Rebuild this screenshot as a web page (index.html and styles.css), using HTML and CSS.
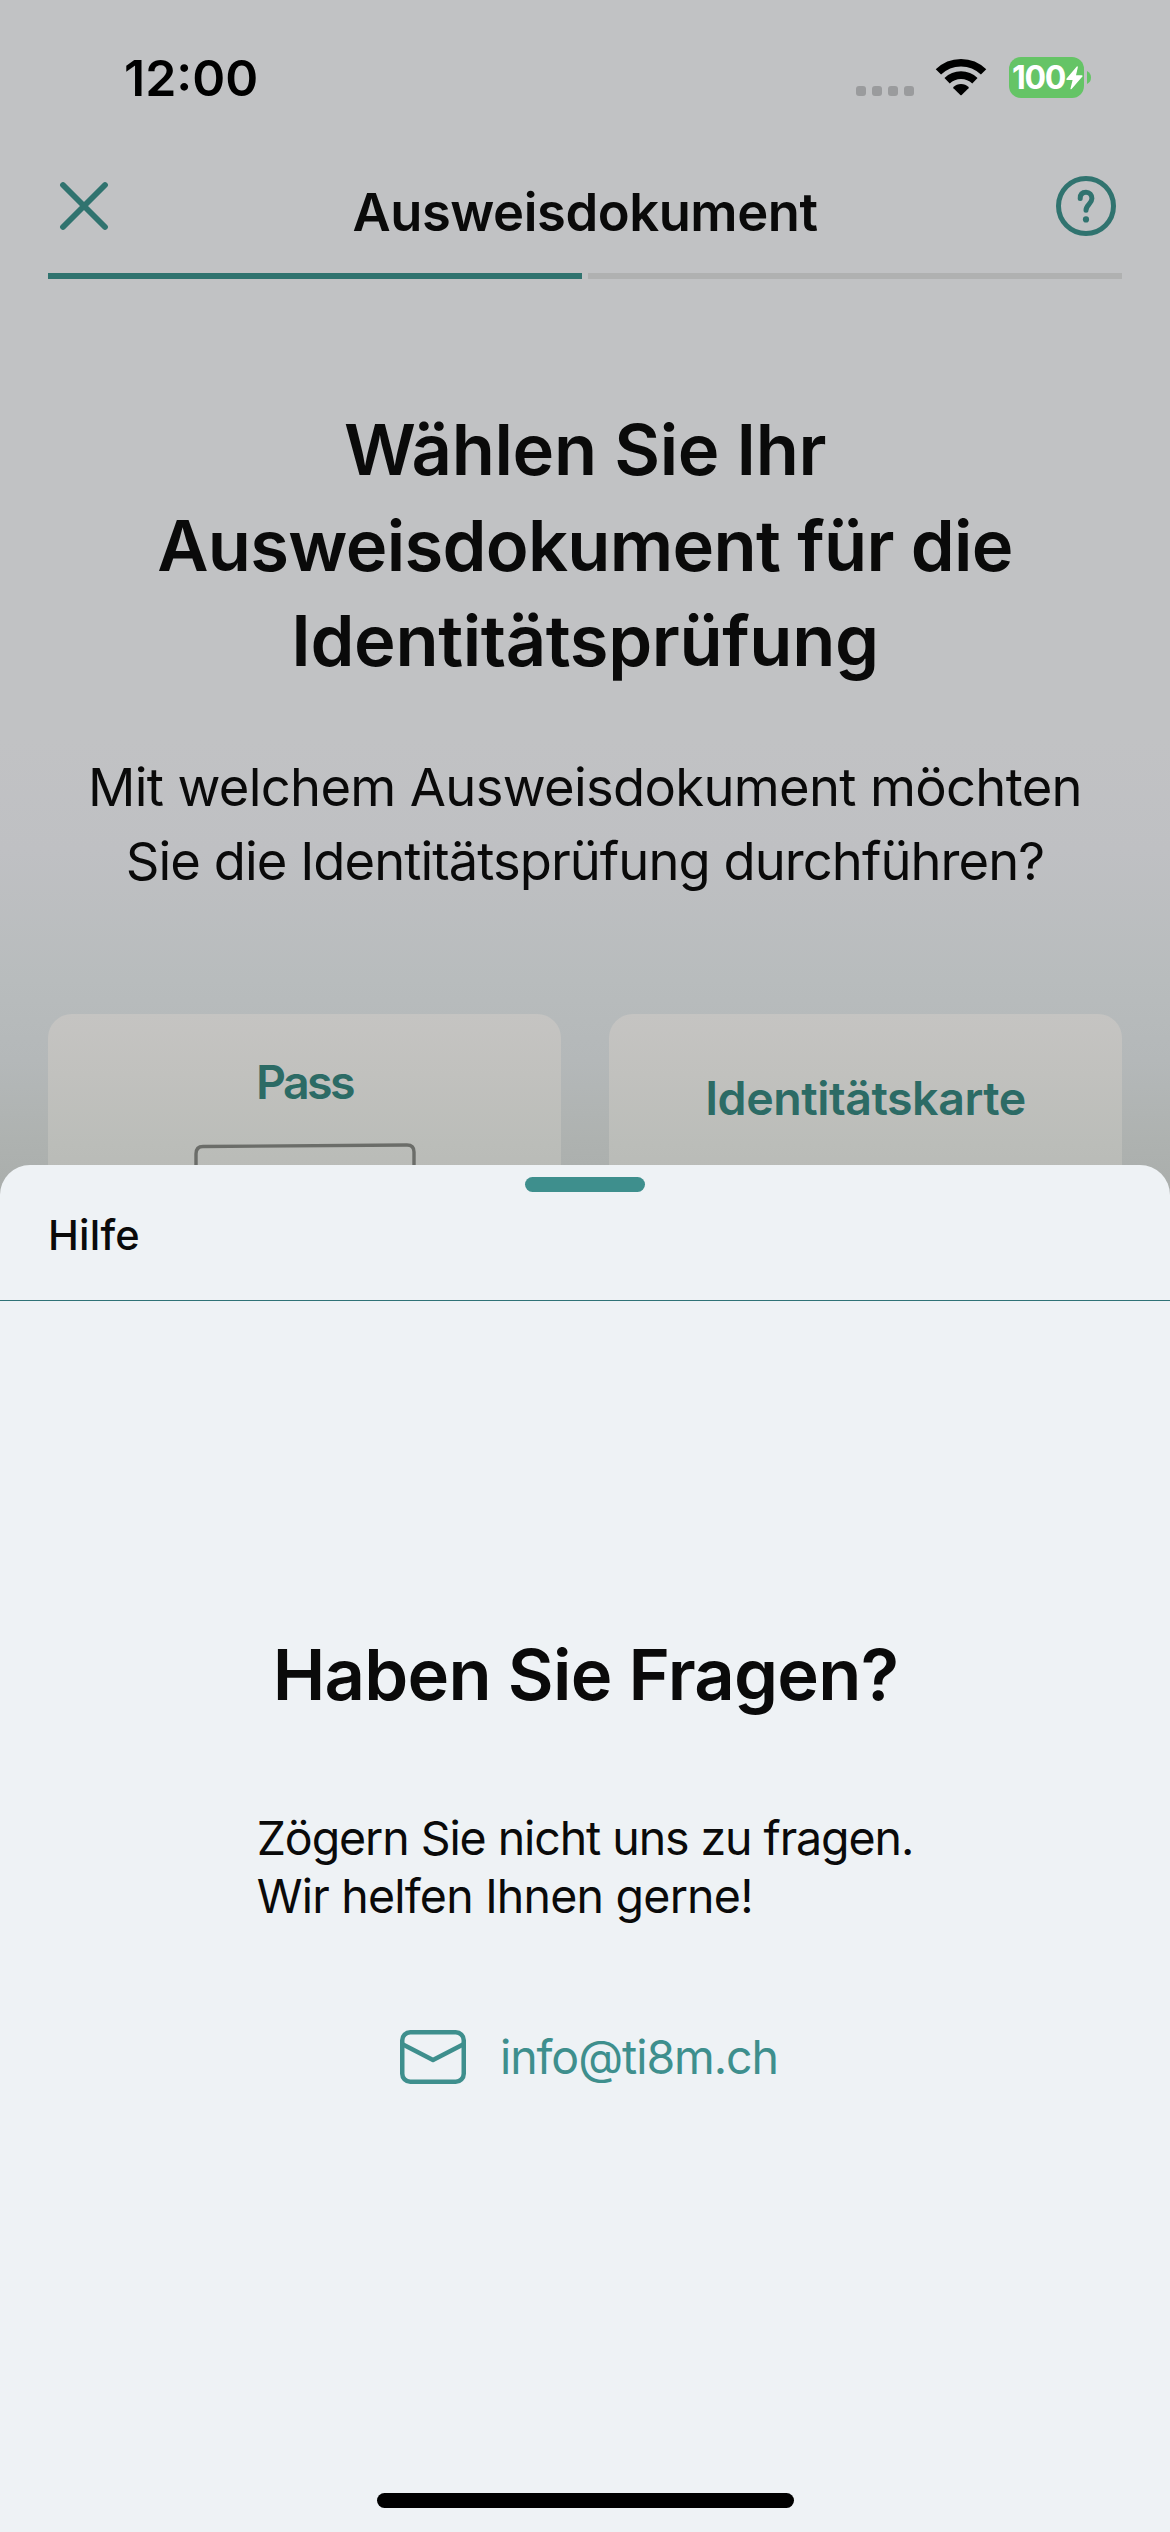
FILE: index.html
```html
<!DOCTYPE html>
<html lang="de">
<head>
<meta charset="utf-8">
<title>Ausweisdokument</title>
<link rel="stylesheet" href="styles.css">
</head>
<body>
<div class="screen">
  <div class="status">
    <span class="time">12:00</span>
    <div class="status-icons">
      <div class="cell"><i></i><i></i><i></i><i></i></div>
      <svg class="wifi" width="52" height="38" viewBox="0 0 52 38"><g fill="none" stroke="#000" stroke-width="7.6"><path d="M3.4 13.9A32.3 32.3 0 0 1 48.6 13.9"/><path d="M12.1 22.7A20 20 0 0 1 39.9 22.7"/></g><path d="M18.4 29.1a10.8 10.8 0 0 1 15.2 0q.4.6-.1 1.1L26.7 37q-.7.6-1.4 0l-6.800-6.800q-.5-.5-.1-1.100z"/></svg>
      <div class="battery">
        <div class="level"><span class="percent">100</span><svg width="17" height="24" viewBox="0 0 17 24"><path fill="#fff" d="M10.800.5Q12 0 11.800 1.400L10 9.300h5.800q1.300.2.4 1.500L5.600 22.900Q4.300 24 4.500 22.400L6.600 13.900H1Q-.2 13.700.6 12.500z"/></svg></div>
        <svg class="nub" width="4" height="13" viewBox="0 0 4 13"><path fill="#65c466" d="M0 0Q4 2 4 6.500T0 13z"/></svg>
      </div>
    </div>
  </div>

  <header class="bar">
    <svg class="close" width="60" height="60" viewBox="0 0 60 60"><path d="M9 9l42 42M51 9L9 51"/></svg>
    <h1 class="bar-title">Ausweisdokument</h1>
    <svg class="help" width="60" height="60" viewBox="0 0 60 60"><circle cx="30" cy="30" r="27.500"/><path d="M24.200 22.500C24.200 18.200 26.500 16.300 30 16.300S35.900 18.800 35.900 22.600C35.900 27.800 30 28.700 30 34.200"/><circle class="dot" cx="30" cy="43.400" r="3.100"/></svg>
  </header>
  <div class="progress"><div class="step done"></div><div class="step"></div></div>

  <main class="content">
    <h2 class="headline">Wählen Sie Ihr<br><span class="tight">Ausweisdokument für die</span><br>Identitätsprüfung</h2>
    <p class="lead">Mit welchem Ausweisdokument möchten<br><span class="tight">Sie die Identitätsprüfung durchführen?</span></p>
    <div class="cards">
      <div class="card"><span class="label pass">Pass</span>
        <svg class="passport" width="222" height="260" viewBox="0 0 222 260"><path d="M2 250V12Q2 4.500 9 4.500L213 3Q220 3 220 10V250"/></svg>
      </div>
      <div class="card id"><span class="label">Identitätskarte</span></div>
    </div>
  </main>

  <section class="sheet">
    <div class="sheet-head"><div class="handle"></div><span class="sheet-title">Hilfe</span></div>
    <div class="sheet-body">
      <h2 class="question">Haben Sie Fragen?</h2>
      <p class="info">Zögern Sie nicht uns zu fragen.<br><span class="loose">Wir helfen Ihnen gerne!</span></p>
      <div class="mail">
        <svg width="66" height="54" viewBox="0 0 66 54"><rect x="2.250" y="2.250" width="61.500" height="49.500" rx="8"/><path d="M3 14.500L33 30 63 14.500"/></svg>
        <span class="address">info@ti8m.ch</span>
      </div>
    </div>
    <div class="home"></div>
  </section>
</div>
</body>
</html>
```
FILE: styles.css
```css
* { box-sizing: border-box; }
body { margin: 0; font-family: Inter, "Liberation Sans", sans-serif; color: #0a0a0a; }
h1, h2, p { margin: 0; }
svg { display: block; flex: none; }

.screen {
  position: relative;
  width: 1170px;
  height: 2532px;
  overflow: hidden;
  background: linear-gradient(#c1c2c4 0, #c1c2c4 740px, #bfc0c3 850px, #b8bcbd 980px, #b4b8b9 1060px, #aeb2b0 1140px, #a9adab 1200px);
}

/* status bar */
.status { display: flex; justify-content: space-between; height: 176px; padding: 48px 79px 0 124px; }
.time { font-size: 50px; line-height: 60px; font-weight: 600; color: #000; }
.status-icons { display: flex; align-items: flex-start; padding-top: 9px; }
.cell { display: flex; gap: 6px; margin: 29px 21px 0 0; }
.cell i { width: 10px; height: 10px; border-radius: 3px; background: #9a9b9d; }
.wifi { margin: 1px 22px 0 0; }
.battery { display: flex; align-items: center; gap: 3px; }
.level { display: flex; align-items: center; width: 75px; height: 41px; padding-left: 3px; border-radius: 12px; background: #65c466; }
.percent { width: 54px; padding-top: 1px; font-size: 32px; line-height: 40px; font-weight: 700; letter-spacing: -1.3px; color: #fff; }

/* navigation bar */
.bar { display: flex; align-items: center; justify-content: space-between; height: 60px; padding: 0 54px; }
.bar svg { fill: none; stroke: #30736f; stroke-width: 5; stroke-linecap: round; stroke-linejoin: round; }
.bar .close { stroke-width: 5.8; }
.bar .dot { fill: #30736f; stroke: none; }
.bar-title { margin-top: 12px; font-size: 52.5px; line-height: 60px; font-weight: 600; letter-spacing: -.45px; }
.progress { display: flex; gap: 6px; margin-top: 37px; padding: 0 48px; }
.step { flex: 1; height: 6px; background: #b0b1b1; }
.step.done { background: #30736f; }

/* document choice */
.content { padding: 123px 48px 0; text-align: center; }
.headline { font-size: 70.5px; line-height: 95.5px; font-weight: 600; letter-spacing: -.35px; }
.headline .tight { letter-spacing: -.7px; }
.lead { margin-top: 61px; font-size: 52.5px; line-height: 74px; letter-spacing: -.68px; }
.lead .tight { letter-spacing: -.95px; }
.cards { display: flex; gap: 48px; margin-top: 116px; }
.card { flex: 1; height: 420px; padding-top: 39px; border-radius: 24px; background: linear-gradient(#c5c4c2 0, #c1c1be 60px, #bbbdb9 130px, #b9bbb7 160px); }
.card.id { padding-top: 55px; }
.label { display: block; width: max-content; margin: 0 auto; font-size: 46.5px; line-height: 58px; font-weight: 600; letter-spacing: -.44px; color: #2c6b65; }
.label.pass { letter-spacing: -2.6px; }
.passport { margin: 31px auto 0; fill: none; stroke: #6b6d69; stroke-width: 3.4; }

/* help sheet */
.sheet { position: absolute; left: 0; right: 0; top: 1165px; bottom: 0; border-radius: 30px 30px 0 0; background: #eef2f5; }
.sheet-head { height: 136px; padding: 12px 48px 0; border-bottom: 1px solid #2f7276; }
.handle { width: 120px; height: 15px; margin: 0 auto 18px; border-radius: 8px; background: #3e8f8d; }
.sheet-title { display: block; width: max-content; font-size: 41.5px; line-height: 50px; font-weight: 550; letter-spacing: .2px; }
.sheet-body { display: flex; flex-direction: column; align-items: center; height: 1192px; padding-top: 326px; }
.question { margin-left: 1px; font-size: 70.5px; line-height: 96px; font-weight: 600; letter-spacing: -.75px; }
.info { margin-top: 86px; font-size: 46.5px; line-height: 58px; letter-spacing: -1.08px; }
.info .loose { letter-spacing: -.78px; }
.mail { display: flex; align-items: center; gap: 34px; margin: 103px 0 0 8px; color: #3e8f8d; }
.mail svg { fill: none; stroke: #3e8f8d; stroke-width: 4.5; stroke-linejoin: round; }
.address { font-size: 46.5px; line-height: 58px; letter-spacing: -1.06px; }
.home { width: 417px; height: 15px; margin: 0 auto; border-radius: 8px; background: #000; }
```
